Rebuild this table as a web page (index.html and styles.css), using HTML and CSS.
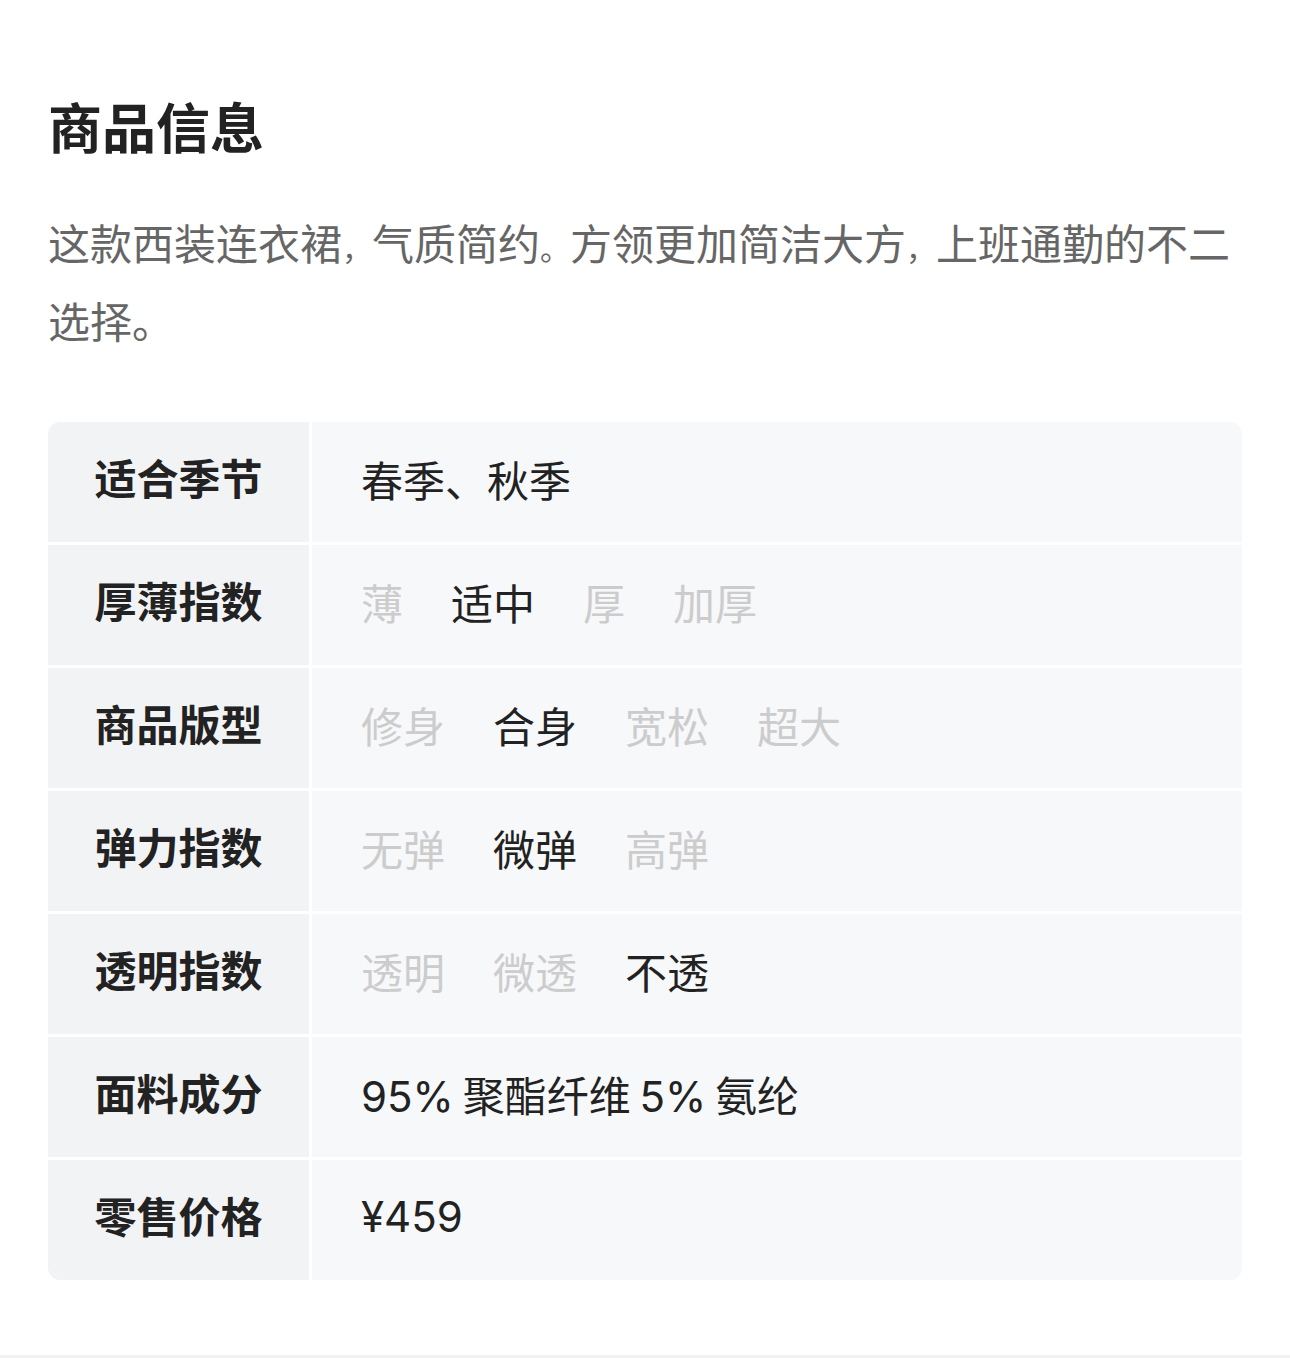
FILE: index.html
```html
<!DOCTYPE html>
<html lang="zh-CN">
<head>
<meta charset="utf-8">
<title>商品信息</title>
<link rel="stylesheet" href="styles.css">
</head>
<body>
<section class="info">
  <h1 class="title">商品信息</h1>
  <p class="desc">这款西装连衣裙<span class="pu">，</span>气质简约<span class="pu">。</span>方领更加简洁大方<span class="pu">，</span>上班通勤的不二选择。</p>
  <div class="table">
    <div class="label">适合季节</div>
    <div class="value"><span class="on">春季、秋季</span></div>

    <div class="label">厚薄指数</div>
    <div class="value"><span class="off">薄</span><span class="on">适中</span><span class="off">厚</span><span class="off">加厚</span></div>

    <div class="label">商品版型</div>
    <div class="value"><span class="off">修身</span><span class="on">合身</span><span class="off">宽松</span><span class="off">超大</span></div>

    <div class="label">弹力指数</div>
    <div class="value"><span class="off">无弹</span><span class="on">微弹</span><span class="off">高弹</span></div>

    <div class="label">透明指数</div>
    <div class="value"><span class="off">透明</span><span class="off">微透</span><span class="on">不透</span></div>

    <div class="label">面料成分</div>
    <div class="value"><span class="on comp">95% 聚酯纤维 5% 氨纶</span></div>

    <div class="label">零售价格</div>
    <div class="value"><span class="on">¥459</span></div>
  </div>
</section>
<div class="next"></div>
</body>
</html>
```

FILE: styles.css
```css
html, body {
  margin: 0;
  padding: 0;
  background: #ffffff;
}

body {
  font-family: "Noto Sans CJK SC", "Noto Sans", sans-serif;
  color: #222222;
}

.info {
  padding: 88px 48px 75px;
}

.title {
  margin: 0;
  font-size: 54px;
  line-height: 76px;
  font-weight: 700;
  color: #222222;
}

.desc {
  margin: 39px 0 0;
  font-size: 42px;
  line-height: 78px;
  color: #666666;
}

.pu {
  font-size: 30px;
  line-height: 1;
}

.table {
  margin-top: 63px;
  display: grid;
  grid-template-columns: 261px 1fr;
  grid-auto-rows: 120px;
  gap: 3px;
  border-radius: 12px;
  overflow: hidden;
}

.label {
  background: #f2f3f5;
  display: flex;
  align-items: center;
  justify-content: center;
  padding-bottom: 12px;
  font-size: 42px;
  font-weight: 700;
  color: #222222;
}

.value {
  background: #f7f8fa;
  display: flex;
  align-items: center;
  gap: 48px;
  padding-left: 49px;
  padding-bottom: 8px;
  font-family: "Inter", "Noto Sans CJK SC", sans-serif;
  font-size: 42px;
  color: #222222;
}

.comp {
  word-spacing: -3px;
}

.on {
  color: #222222;
}

.off {
  color: #cccccc;
}

.next {
  height: 10px;
  background: #f2f2f2;
}
```
